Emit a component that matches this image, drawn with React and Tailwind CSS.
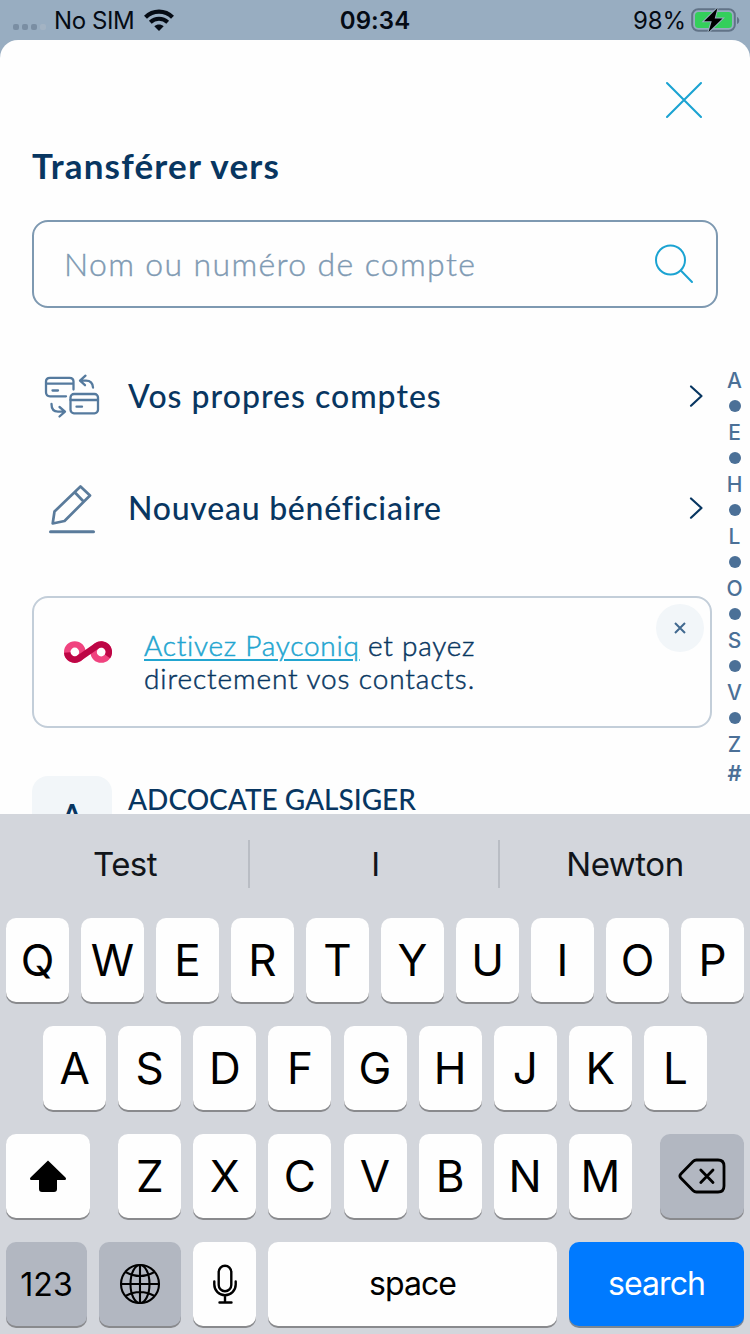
const brand = "font-['Lato','Open_Sans',sans-serif]";

function StatusBar() {
  return (
    <header className="relative flex h-10 items-center justify-between text-[24px] leading-10 text-[#050b14]">
      <div className="flex items-center pl-[13px]">
        <div className="mt-[13px] flex gap-[3px]">
          <span className="size-[6px] rounded-[2px] bg-[#7a8ea3]" />
          <span className="size-[6px] rounded-[2px] bg-[#7a8ea3]" />
          <span className="size-[6px] rounded-[2px] bg-[#7a8ea3]" />
          <span className="size-[6px] rounded-[2px] bg-[#a3b3c3]" />
        </div>
        <span className="ml-[8px] w-[90px] pt-[2px] whitespace-nowrap tracking-[-0.4px]">No SIM</span>
        <svg className="h-[22px] w-[30px]" viewBox="0 0 30 22" fill="none" stroke="#050b14">
          <path d="M1.500 8.200C9 .8 21 .8 28.500 8.200" strokeWidth="4.200" />
          <path d="M6.300 13.200C11.200 8.600 18.800 8.600 23.700 13.200" strokeWidth="4" />
          <path d="M15 22L10.300 17.300C13 14.800 17 14.800 19.700 17.300Z" fill="#050b14" stroke="none" />
        </svg>
      </div>
      <span className="absolute inset-x-0 pt-[2px] text-center font-semibold tracking-[0.1px]">09:34</span>
      <div className="flex items-center pr-[10px]">
        <span className="pt-[2px] tracking-[-0.1px]">98%</span>
        <svg className="ml-[5px] h-[26px] w-[49px]" viewBox="0 0 49 26" fill="none">
          <rect x="1.200" y="2.200" width="42.600" height="21.600" rx="6" stroke="#617387" strokeWidth="2" />
          <rect x="4" y="5" width="37" height="16" rx="3.500" fill="#34cf5b" />
          <path d="M46 10V17C49 16 49 11 46 10Z" fill="#617387" />
          <path d="M26.500 1L13 14.200H20.700L17.500 25L31.500 11.500H23.700Z" fill="#000" stroke="#98adc1" strokeWidth="2" paintOrder="stroke" />
        </svg>
      </div>
    </header>
  );
}

function Chevron() {
  return (
    <svg className="mr-[14px] ml-auto h-[24px] w-[16px]" viewBox="0 0 16 24" fill="none" stroke="#083661" strokeWidth="2.200" strokeLinecap="round" strokeLinejoin="round">
      <path d="M3 2.500L13.500 12L3 21.700" />
    </svg>
  );
}

function AccountsIcon() {
  return (
    <svg className="h-12 w-14" viewBox="0 0 56 48" fill="none" stroke="#557a9e" strokeWidth="2.300" strokeLinecap="round" strokeLinejoin="round">
      <path d="M22 24.300H6Q2 24.300 2 20.300V9.500Q2 5.800 6 5.800H25.500Q29.500 5.800 29.500 9.500V17.500M2 11.700H29.500M8.500 18.500H14" />
      <rect x="26.500" y="22" width="27.500" height="19.300" rx="3.500" />
      <path d="M26.500 28H54M32.500 34.700H38" />
      <path d="M49 15.500Q48.500 8.700 42 8.700H36.500M41.500 3.700L36 8.700L41 13.200" />
      <path d="M7.500 32Q7.500 39.600 14 39.600H20.500M15.500 35L21 39.600L15.500 44.500" />
    </svg>
  );
}

function PencilIcon() {
  return (
    <svg className="h-[52px] w-12" viewBox="0 0 48 52" fill="none" stroke="#5a7b9b" strokeWidth="2.700" strokeLinecap="round" strokeLinejoin="round">
      <path d="M32.500 4.500L42 13.500L16.500 39L4.700 41.500L6.500 29.500ZM27 10.500L35.500 19.500" />
      <path d="M2.500 49.700H45.500" strokeWidth="3" />
    </svg>
  );
}

function Infinity() {
  return (
    <svg className="h-6 w-12" viewBox="0 0 48 24" fill="none" strokeWidth="6.400">
      <circle cx="10.800" cy="12" r="7.600" stroke="#f0437f" />
      <circle cx="37.200" cy="12" r="7.600" stroke="#f0437f" />
      <path d="M3.200 12.500A7.600 7.600 0 0 0 15.200 18.200L32.800 5.800A7.600 7.600 0 0 1 43.500 16.300" stroke="#bd0645" />
    </svg>
  );
}

const indexItems = ["A", "", "E", "", "H", "", "L", "", "O", "", "S", "", "V", "", "Z"];

function AlphabetIndex() {
  return (
    <nav className="absolute top-[327px] right-0 flex w-[31px] flex-col items-center font-['Inter','Liberation_Sans',sans-serif] text-[21px] font-medium text-[#4b7097]">
      {indexItems.map((item, i) => (
        <div key={i} className="flex h-[26px] items-center justify-center leading-[26px]">
          {item ? <span className="pt-[2px]">{item}</span> : <span className="size-3 rounded-full bg-[#4b7097]" />}
        </div>
      ))}
      <div className="mt-[3px] h-[26px] text-[22px] leading-[26px] font-semibold">#</div>
    </nav>
  );
}

function Sheet() {
  return (
    <main className={`relative h-[774px] overflow-hidden rounded-t-[18px] bg-[#fefefe] text-[#083661] ${brand}`}>
      <div className="flex justify-end pt-[41px] pr-[47px]">
        <svg className="size-[38px]" viewBox="0 0 38 38" fill="none" stroke="#1ba3d2" strokeWidth="2.100" strokeLinecap="round">
          <path d="M2 2L36 36M36 2L2 36" />
        </svg>
      </div>
      <h1 className="mt-[26px] ml-8 h-10 text-[35px] leading-10 font-bold tracking-[1.2px] whitespace-nowrap">Transférer vers</h1>
      <div className="mt-[35px] ml-8 flex h-[88px] w-[686px] items-center justify-between rounded-[16px] border-2 border-[#7e99b1] pr-[22px] pl-[30px]">
        <span className="text-[32px] font-light tracking-[1.35px] whitespace-nowrap text-[#7f9ab3] [-webkit-text-stroke:0.4px_#7f9ab3]">Nom ou numéro de compte</span>
        <svg className="size-10" viewBox="0 0 40 40" fill="none" stroke="#1ba3d2" strokeWidth="2" strokeLinecap="round">
          <circle cx="16.500" cy="16" r="14.500" />
          <path d="M26.800 26.500L38 38" />
        </svg>
      </div>
      <div className="mt-8 ml-8 flex h-[112px] w-[686px] items-center">
        <div className="w-24 pl-3"><AccountsIcon /></div>
        <span className="text-[32px] font-medium tracking-[1px] whitespace-nowrap">Vos propres comptes</span>
        <Chevron />
      </div>
      <div className="ml-8 flex h-[112px] w-[686px] items-center">
        <div className="w-24 pl-4"><PencilIcon /></div>
        <span className="text-[32px] font-medium tracking-[0.75px] whitespace-nowrap">Nouveau bénéficiaire</span>
        <Chevron />
      </div>
      <section className="relative mt-8 ml-8 flex h-[132px] w-[680px] rounded-[16px] border-2 border-[#c3ced9] pt-[31px] pl-[30px]">
        <div className="mt-[11px]"><Infinity /></div>
        <p className="ml-8 text-[28px] leading-[33px] font-light whitespace-nowrap [-webkit-text-stroke:0.5px]">
          <span className="block tracking-[0.75px]"><a className="text-[#22a5d0] underline decoration-2 underline-offset-[3px]">Activez Payconiq</a> et payez</span>
          <span className="block tracking-[0.9px]">directement vos contacts.</span>
        </p>
        <button className="absolute top-[6px] right-[6px] flex size-12 items-center justify-center rounded-full bg-[#f2f6f9]">
          <svg className="size-3" viewBox="0 0 12 12" stroke="#41698f" strokeWidth="2"><path d="M1 1L11 11M11 1L1 11" /></svg>
        </button>
      </section>
      <div className="mt-12 ml-8 flex">
        <div className="flex size-20 items-center justify-center rounded-[16px] bg-[#f2f6f9] text-[32px] font-semibold">A</div>
        <span className="ml-4 mt-[3px] text-[28px] leading-10 font-medium whitespace-nowrap">ADCOCATE GALSIGER</span>
      </div>
      <AlphabetIndex />
    </main>
  );
}

const keyBase = "flex h-[84px] items-center justify-center rounded-[10px] text-black";
const light = "bg-[#fefefe] shadow-[0_2px_0_#898a8d]";
const dark = "bg-[#b2b7c1] shadow-[0_2px_0_#898a8d]";

function Letter({ children }) {
  return <div className={`${keyBase} ${light} w-[63px] pb-[1px] text-[44px]`}>{children}</div>;
}

function Keyboard() {
  return (
    <footer className="h-[520px] bg-[#d3d6dc]">
      <div className="flex h-[104px] items-center pb-[4px] text-[33px] tracking-[-0.5px] text-[#11151a]">
        <div className="w-[248px] pt-[2px] pl-[2px] text-center">Test</div>
        <span className="h-12 w-[2px] bg-[#b9bdc4]" />
        <div className="w-[248px] pt-[2px] pl-[3px] text-center">I</div>
        <span className="h-12 w-[2px] bg-[#b9bdc4]" />
        <div className="w-[250px] pt-[2px] text-center">Newton</div>
      </div>
      <div className="flex flex-col gap-6">
        <div className="flex justify-center gap-3">
          {[..."QWERTYUIOP"].map((k) => <Letter key={k}>{k}</Letter>)}
        </div>
        <div className="flex justify-center gap-[12.1px]">
          {[..."ASDFGHJKL"].map((k) => <Letter key={k}>{k}</Letter>)}
        </div>
        <div className="flex justify-between px-[6px]">
          <div className={`${keyBase} ${light} w-[84px]`}>
            <svg className="h-[34px] w-[38px]" viewBox="0 0 38 34"><path d="M19 1.500L36.500 18.500Q38 20.700 35.500 21H28V30Q28 33 25 33H13Q10 33 10 30V21H2.500Q0 20.700 1.500 18.500Z" /></svg>
          </div>
          <div className="flex gap-[12.1px]">
            {[..."ZXCVBNM"].map((k) => <Letter key={k}>{k}</Letter>)}
          </div>
          <div className={`${keyBase} ${dark} w-[84px]`}>
            <svg className="h-9 w-12" viewBox="0 0 48 36" fill="none" stroke="#000" strokeWidth="2.800" strokeLinecap="round" strokeLinejoin="round">
              <path d="M18.500 2H40Q46 2 46 8V28Q46 34 40 34H18.500Q16.500 34 15 32.500L2.800 20Q1 18 2.800 16L15 3.500Q16.500 2 18.500 2Z" />
              <path d="M22.800 12L35 24.500M35 12L22.800 24.500" />
            </svg>
          </div>
        </div>
        <div className="flex gap-3 px-[6px]">
          <div className={`${keyBase} ${dark} w-[81px] pt-[2px] text-[32px]`}>123</div>
          <div className={`${keyBase} ${dark} w-[82px]`}>
            <svg className="size-[42px]" viewBox="0 0 42 42" fill="none" stroke="#000" strokeWidth="2.100">
              <circle cx="21" cy="21" r="19" />
              <ellipse cx="21" cy="21" rx="9.500" ry="19" />
              <path d="M21 2V40M2 21H40M6.500 9Q21 17 35.500 9M6.500 33Q21 25 35.500 33" />
            </svg>
          </div>
          <div className={`${keyBase} ${light} w-[63px]`}>
            <svg className="h-10 w-6" viewBox="0 0 24 40" fill="none" stroke="#000" strokeWidth="2.400" strokeLinecap="round">
              <rect x="5.700" y="1.700" width="12.600" height="25.600" rx="6.300" />
              <path d="M1.300 17.500V20.500A10.700 10.700 0 0 0 22.700 20.500V17.500M12 32V38M6.500 38.500H18.500" />
            </svg>
          </div>
          <div className={`${keyBase} ${light} w-[289px] text-[32px] tracking-[-0.9px]`}><span className="pb-[1px]">space</span></div>
          <div className={`${keyBase} w-[175px] bg-[#007aff] text-[32px] tracking-[-0.9px] shadow-[0_2px_0_#7b8794]`}><span className="pb-[1px] text-white">search</span></div>
        </div>
      </div>
    </footer>
  );
}

export default function App() {
  return (
    <div className="h-[1334px] w-[750px] overflow-hidden bg-[#98adc1] font-['Inter','Liberation_Sans',sans-serif]">
      <StatusBar />
      <Sheet />
      <Keyboard />
    </div>
  );
}
